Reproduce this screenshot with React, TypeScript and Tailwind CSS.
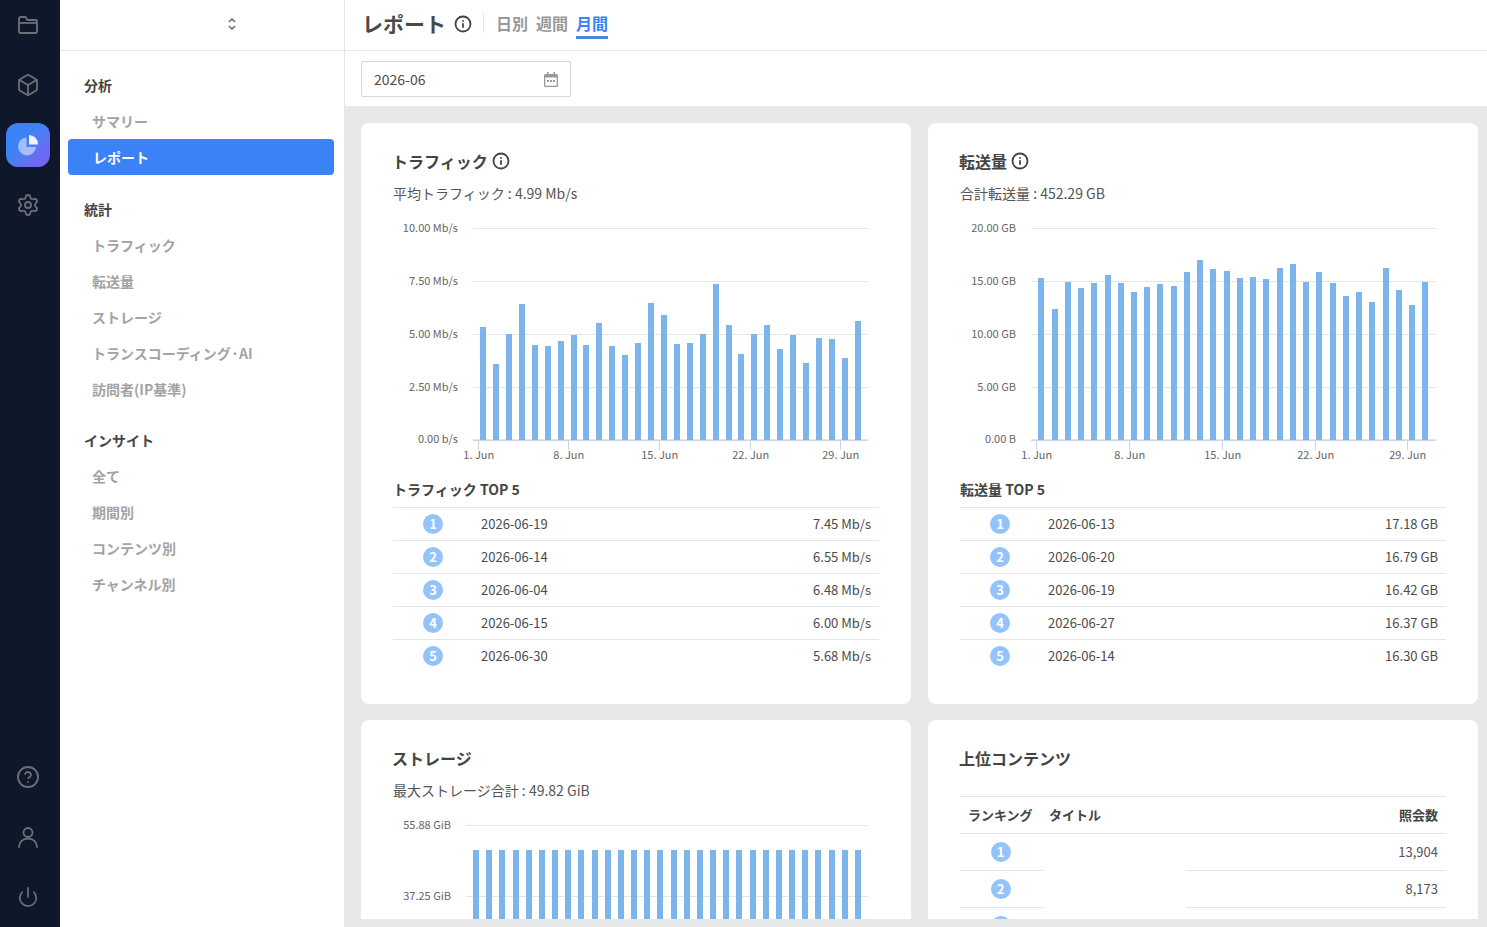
import { ReactNode } from "react";
import { Box, CircleHelp, Info, Power, Settings } from "lucide-react";

const trafficTops = [321, 432, 342, 252, 375, 378, 363, 345, 375, 309, 378, 405, 369, 249, 285, 372, 369, 342, 192, 315, 402, 342, 315, 387, 345, 429, 354, 357, 414, 303];
const trafficLefts = [270, 309, 348, 387, 426, 465, 504, 543, 579, 618, 657, 696, 735, 774, 813, 852, 891, 930, 969, 1008, 1044, 1083, 1122, 1161, 1200, 1239, 1278, 1317, 1356, 1395];
const transferTops = [174, 267, 186, 204, 189, 165, 189, 216, 201, 192, 198, 156, 120, 147, 153, 174, 171, 177, 144, 132, 186, 156, 189, 228, 216, 246, 144, 210, 255, 186];
const transferLefts = [234, 276, 315, 354, 393, 435, 474, 513, 552, 591, 633, 672, 711, 750, 792, 831, 870, 909, 951, 990, 1029, 1068, 1110, 1149, 1188, 1227, 1269, 1308, 1347, 1386];

const trafficBars = trafficTops.map((top, i) => ({ x: 390 + trafficLefts[i] / 3, top: 220 + top / 3 }));
const transferBars = transferTops.map((top, i) => ({ x: 960 + transferLefts[i] / 3, top: 220 + top / 3 }));
const storageBars = Array.from({ length: 30 }, (_, i) => ({ x: Math.round(473 + i * 13.17), top: 850 }));

const trafficTop5 = [
  ["2026-06-19", "7.45 Mb/s"],
  ["2026-06-14", "6.55 Mb/s"],
  ["2026-06-04", "6.48 Mb/s"],
  ["2026-06-15", "6.00 Mb/s"],
  ["2026-06-30", "5.68 Mb/s"],
];
const transferTop5 = [
  ["2026-06-13", "17.18 GB"],
  ["2026-06-20", "16.79 GB"],
  ["2026-06-19", "16.42 GB"],
  ["2026-06-27", "16.37 GB"],
  ["2026-06-14", "16.30 GB"],
];

const navSections = [
  { title: "分析", className: "", items: ["サマリー", "レポート"] },
  { title: "統計", className: "mt-6", items: ["トラフィック", "転送量", "ストレージ", "トランスコーディング·AI", "訪問者(IP基準)"] },
  { title: "インサイト", className: "mt-[23px]", items: ["全て", "期間別", "コンテンツ別", "チャンネル別"] },
];

function FolderIcon() {
  return (
    <svg width="24" height="24" viewBox="0 0 24 24" fill="none" stroke="currentColor" strokeWidth="1.8">
      <path d="M3 5.500A1.500 1.500 0 0 1 4.500 4h5l2 3h8A1.500 1.500 0 0 1 21 8.500v10a1.500 1.500 0 0 1-1.500 1.500h-15A1.500 1.500 0 0 1 3 18.500z" />
      <path d="M3 10h18" />
    </svg>
  );
}

function UserIcon() {
  return (
    <svg width="24" height="24" viewBox="0 0 24 24" fill="none" stroke="currentColor" strokeWidth="1.8" strokeLinecap="round">
      <circle cx="12" cy="7.500" r="4.500" />
      <path d="M3 22c0-5 4-8.500 9-8.500s9 3.500 9 8.500" />
    </svg>
  );
}

function PieIcon() {
  return (
    <svg width="24" height="24" viewBox="0 0 24 24">
      <path d="M10.500 4.500a9 9 0 1 0 9.500 9.500h-9.500z" fill="#ffffff" fillOpacity="0.5" />
      <path d="M13 2a9 9 0 0 1 9 9.500h-9z" fill="#ffffff" fillOpacity="0.9" />
    </svg>
  );
}

function CalendarIcon() {
  return (
    <svg width="14" height="15" viewBox="0 0 14 15" className="text-[#9a9a9a]">
      <path d="M3 0h1.500v2h5V0H11v2h1.500A1.500 1.500 0 0 1 14 3.500v10a1.500 1.500 0 0 1-1.500 1.500h-11A1.500 1.500 0 0 1 0 13.500v-10A1.500 1.500 0 0 1 1.500 2H3z" fill="currentColor" />
      <rect x="1.300" y="5.500" width="11.400" height="8.200" fill="#ffffff" />
      <rect x="3" y="8" width="2" height="2" fill="currentColor" />
      <rect x="6" y="8" width="2" height="2" fill="currentColor" />
      <rect x="9" y="8" width="2" height="2" fill="currentColor" />
    </svg>
  );
}

function Rail() {
  return (
    <aside className="w-[60px] shrink-0 bg-[#0f172a] text-[#6d7076] flex flex-col justify-between pb-[5px] pr-1">
      <div className="flex flex-col gap-[10px]">
        <div className="h-[50px] flex items-center justify-center">
          <FolderIcon />
        </div>
        <div className="h-[50px] flex items-center justify-center">
          <Box size={24} strokeWidth={1.8} />
        </div>
        <div className="h-[50px] flex items-center justify-center">
          <div className="w-11 h-11 rounded-xl flex items-center justify-center bg-gradient-to-br from-[#3b82f6] from-40% to-[#7c5cf0]">
            <PieIcon />
          </div>
        </div>
        <div className="h-[50px] flex items-center justify-center">
          <Settings size={24} strokeWidth={1.8} />
        </div>
      </div>
      <div className="flex flex-col gap-[10px]">
        <div className="h-[50px] flex items-center justify-center">
          <CircleHelp size={24} strokeWidth={1.8} />
        </div>
        <div className="h-[50px] flex items-center justify-center">
          <UserIcon />
        </div>
        <div className="h-[50px] flex items-center justify-center">
          <Power size={22} strokeWidth={1.9} />
        </div>
      </div>
    </aside>
  );
}

function Sidebar() {
  return (
    <aside className="w-[285px] shrink-0 bg-white border-r border-[#e5e5e5] flex flex-col">
      <div className="h-[51px] shrink-0 border-b border-[#e5e5e5] flex items-center pl-[168px]">
        <svg width="8" height="14" viewBox="0 0 8 14" fill="none" stroke="#666666" strokeWidth="1.500" className="mb-[2px]">
          <path d="M1 5l3-3 3 3" />
          <path d="M1 9l3 3 3-3" />
        </svg>
      </div>
      <nav className="pt-6 pl-2 pr-[10px]">
        {navSections.map((section) => (
          <div key={section.title} className={section.className}>
            <div className="h-5 pl-4 mb-2 text-sm leading-5 font-bold text-[#444444]">{section.title}</div>
            {section.items.map((item) =>
              item === "レポート" ? (
                <div key={item} className="h-9 pl-[25px] flex items-center rounded bg-[#3b82f6] text-sm font-bold text-white">
                  {item}
                </div>
              ) : (
                <div key={item} className="h-9 pl-6 flex items-center text-sm font-bold text-[#a3a3a3]">
                  {item}
                </div>
              ),
            )}
          </div>
        ))}
      </nav>
    </aside>
  );
}

interface BarChartProps {
  originX: number;
  originY: number;
  height: number;
  gridLeft: number;
  gridRight: number;
  labelX: number;
  grid: { y: number; label: string }[];
  bars: { x: number; top: number }[];
  baseline: number;
  ticks?: { x: number; label: string }[];
}

function BarChart({ originX, originY, height, gridLeft, gridRight, labelX, grid, bars, baseline, ticks }: BarChartProps) {
  return (
    <svg width="486" height={height} viewBox={`${originX} ${originY} 486 ${height}`} className="block">
      {grid.map((line) => (
        <g key={line.label}>
          <line x1={gridLeft} x2={gridRight} y1={line.y} y2={line.y} stroke="#e6e6e6" />
          <text x={labelX} y={line.y + 3} textAnchor="end" fill="#666666" fontSize="11">
            {line.label}
          </text>
        </g>
      ))}
      {bars.map((bar) => (
        <rect key={bar.x} x={bar.x} y={bar.top} width="6" height={baseline - bar.top} fill="#7cb5ec" />
      ))}
      {ticks && <line x1={gridLeft} x2={gridRight} y1={baseline + 0.5} y2={baseline + 0.5} stroke="#ccd6eb" />}
      {ticks?.map((tick) => (
        <g key={tick.label}>
          <line x1={tick.x} x2={tick.x} y1={baseline} y2={baseline + 10} stroke="#ccd6eb" />
          <text x={tick.x + 0.25} y={baseline + 19} textAnchor="middle" fill="#666666" fontSize="11">
            {tick.label}
          </text>
        </g>
      ))}
    </svg>
  );
}

function RankBadge({ rank }: { rank: number }) {
  return (
    <span className="w-5 h-5 rounded-full bg-[#93c3fb] text-white text-[13px] font-bold flex items-center justify-center">
      {rank}
    </span>
  );
}

function TopTable({ title, rows }: { title: string; rows: string[][] }) {
  return (
    <div>
      <div className="h-5 mt-[11px] mb-2 text-sm leading-5 font-bold text-[#444444]">{title}</div>
      {rows.map(([date, value], i) => (
        <div key={date} className="h-[33px] border-t border-[#e5e5e5] flex items-center text-[13px] text-[#4b4b4b]">
          <div className="w-[88px] pl-[30px] shrink-0">
            <RankBadge rank={i + 1} />
          </div>
          <div className="flex-1">{date}</div>
          <div className="pr-2">{value}</div>
        </div>
      ))}
    </div>
  );
}

function Card({ title, info, summary, children }: { title: string; info?: boolean; summary?: string; children: ReactNode }) {
  return (
    <section className="bg-white rounded-lg px-8 pt-7 h-[581px] overflow-hidden">
      <h2 className="h-5 -ml-px flex items-center gap-1 text-base font-bold text-[#444444]">
        {title}
        {info && <Info size={18} strokeWidth={2.4} className="text-[#444444]" />}
      </h2>
      {summary && <p className="h-5 mt-3 text-sm leading-5 text-[#555555]">{summary}</p>}
      {children}
    </section>
  );
}

export default function App() {
  const topRanks = [
    { rank: 1, value: "13,904" },
    { rank: 2, value: "8,173" },
    { rank: 3, value: "" },
  ];

  return (
    <div className="h-screen overflow-hidden flex font-['Noto_Sans_CJK_JP','Noto_Sans',sans-serif]">
      <Rail />
      <Sidebar />
      <main className="flex-1 min-w-0 flex flex-col bg-[#e8e8e8]">
        <header className="h-[51px] shrink-0 bg-white border-b border-[#e5e5e5] pl-[17px] flex items-center">
          <h1 className="text-[21px] font-bold text-[#4a4a4a] mb-[2px]">レポート</h1>
          <Info size={18} strokeWidth={2.4} className="ml-2 mb-[3px] text-[#444444]" />
          <div className="w-px h-5 bg-[#e5e5e5] ml-[11px] mr-3 mb-[4px]" />
          <div className="flex gap-2 text-base font-bold text-[#999999] self-start mt-[10px]">
            <span className="h-[29px] pt-[3px] leading-5">日別</span>
            <span className="h-[29px] pt-[3px] leading-5">週間</span>
            <span className="h-[29px] pt-[3px] leading-5 border-b-[3px] border-[#4a86d8] text-[#3b82f6]">月間</span>
          </div>
        </header>
        <div className="h-[55px] shrink-0 bg-white pt-[10px] px-4">
          <div className="w-[210px] h-9 border border-[#d6d6d6] rounded-[2px] pl-3 pr-[12px] flex items-center justify-between text-sm text-[#4b4b4b]">
            <span>2026-06</span>
            <CalendarIcon />
          </div>
        </div>
        <div className="flex-1 min-h-0 pb-2">
          <div className="h-full overflow-hidden pt-[17px] pl-4 pr-[9px]">
            <div className="grid grid-cols-2 gap-x-[17px] gap-y-4">
              <Card title="トラフィック" info summary="平均トラフィック : 4.99 Mb/s">
                <div className="mt-[15px]">
                  <BarChart
                    originX={393}
                    originY={218}
                    height={250}
                    gridLeft={473}
                    gridRight={868}
                    labelX={458}
                    baseline={440}
                    bars={trafficBars}
                    grid={[
                      { y: 228.5, label: "10.00 Mb/s" },
                      { y: 281.5, label: "7.50 Mb/s" },
                      { y: 334.5, label: "5.00 Mb/s" },
                      { y: 387.5, label: "2.50 Mb/s" },
                      { y: 439.5, label: "0.00 b/s" },
                    ]}
                    ticks={[
                      { x: 478.5, label: "1. Jun" },
                      { x: 568.5, label: "8. Jun" },
                      { x: 659.5, label: "15. Jun" },
                      { x: 750.5, label: "22. Jun" },
                      { x: 840.5, label: "29. Jun" },
                    ]}
                  />
                </div>
                <TopTable title="トラフィック TOP 5" rows={trafficTop5} />
              </Card>
              <Card title="転送量" info summary="合計転送量 : 452.29 GB">
                <div className="mt-[15px]">
                  <BarChart
                    originX={960}
                    originY={218}
                    height={250}
                    gridLeft={1031}
                    gridRight={1436}
                    labelX={1016}
                    baseline={440}
                    bars={transferBars}
                    grid={[
                      { y: 228.5, label: "20.00 GB" },
                      { y: 281.5, label: "15.00 GB" },
                      { y: 334.5, label: "10.00 GB" },
                      { y: 387.5, label: "5.00 GB" },
                      { y: 439.5, label: "0.00 B" },
                    ]}
                    ticks={[
                      { x: 1036.5, label: "1. Jun" },
                      { x: 1129.5, label: "8. Jun" },
                      { x: 1222.5, label: "15. Jun" },
                      { x: 1315.5, label: "22. Jun" },
                      { x: 1407.5, label: "29. Jun" },
                    ]}
                  />
                </div>
                <TopTable title="転送量 TOP 5" rows={transferTop5} />
              </Card>
              <Card title="ストレージ" summary="最大ストレージ合計 : 49.82 GiB">
                <div className="mt-[15px]">
                  <BarChart
                    originX={393}
                    originY={815}
                    height={250}
                    gridLeft={466}
                    gridRight={868}
                    labelX={451}
                    baseline={1040}
                    bars={storageBars}
                    grid={[
                      { y: 825.5, label: "55.88 GiB" },
                      { y: 896.5, label: "37.25 GiB" },
                    ]}
                  />
                </div>
              </Card>
              <Card title="上位コンテンツ">
                <div className="mt-7">
                  <div className="h-[38px] pb-px border-y border-[#e5e5e5] flex items-center justify-between text-[13px] font-bold text-[#444444]">
                    <div className="flex">
                      <span className="w-[89px] pl-2">ランキング</span>
                      <span>タイトル</span>
                    </div>
                    <span className="pr-2">照会数</span>
                  </div>
                  {topRanks.map((row) => (
                    <div key={row.rank} className="h-[37px] grid grid-cols-[83px_143px_1fr] text-[13px] text-[#555555]">
                      <div className="border-b border-[#e5e5e5] pr-[2px] flex items-center justify-center">
                        <RankBadge rank={row.rank} />
                      </div>
                      <div />
                      <div className="border-b border-[#e5e5e5] flex items-center justify-end pr-2">{row.value}</div>
                    </div>
                  ))}
                </div>
              </Card>
            </div>
          </div>
        </div>
      </main>
    </div>
  );
}
